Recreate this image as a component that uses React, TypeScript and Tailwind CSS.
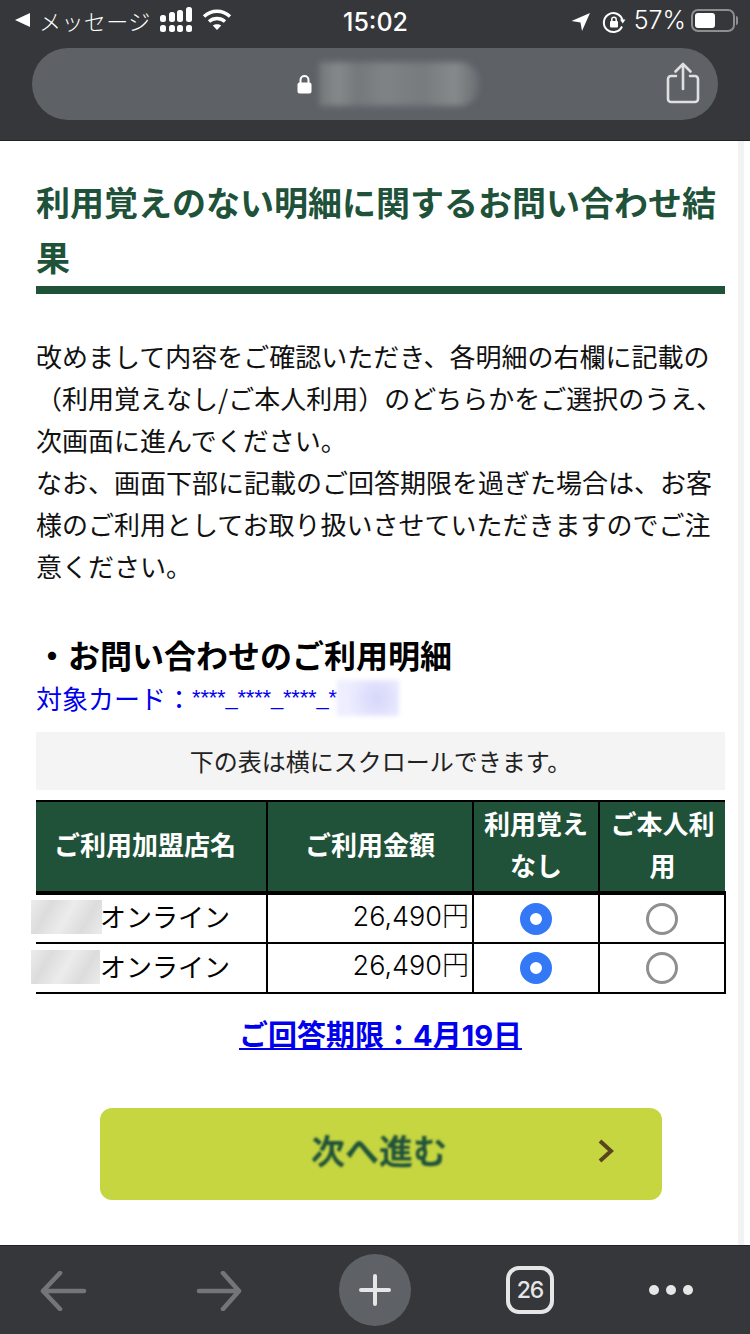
const FONT = "font-['Noto_Sans_CJK_JP','Noto_Sans',sans-serif]";

function StatusBar() {
    return (
        <div className="h-[48px] pb-[8px] flex items-center justify-between pl-[14px] pr-[12px] text-white relative">
            <div className="flex items-center">
                <svg width="17" height="16" viewBox="0 0 17 16"><path d="M1 8 L16 1 V15 Z" fill="#fff" /></svg>
                <span className="ml-[8px] text-[22px] font-light leading-none tracking-[0.4px]">メッセージ</span>
                {/* signal */}
                <svg width="34" height="26" viewBox="0 0 34 26" className="ml-[8px]" fill="#fff">
                    <rect x="1" y="8" width="6" height="7" rx="2.5" />
                    <rect x="10" y="5" width="6" height="10" rx="2.5" />
                    <rect x="18" y="3" width="6" height="12" rx="2.5" />
                    <rect x="27" y="0" width="6" height="15" rx="2.5" />
                    <rect x="1" y="18" width="6" height="7" rx="2.5" />
                    <rect x="10" y="18" width="6" height="7" rx="2.5" />
                    <rect x="18" y="18" width="6" height="7" rx="2.5" />
                    <rect x="27" y="18" width="6" height="7" rx="2.5" />
                </svg>
                <svg width="30" height="24" viewBox="0 0 30 24" className="ml-[9px]" fill="none" stroke="#fff" strokeWidth="3.4">
                    <path d="M2 8.5 C9.5 1.5 20.5 1.5 28 8.5" />
                    <path d="M7 13.5 C11.5 9.5 18.5 9.5 23 13.5" />
                    <path d="M15 22 L10.8 17.6 C13 15.8 17 15.8 19.2 17.6 Z" fill="#fff" stroke="none" />
                </svg>
            </div>
            <div className="absolute left-[343px] top-[9px] text-[25px] leading-[26px] font-['Inter',sans-serif] font-medium">15:02</div>
            <div className="flex items-center">
                <svg width="20" height="20" viewBox="0 0 20 20" className="mt-[4px]"><path d="M0.5 9 L19 1 L11 19 L9.5 10.5 Z" fill="#fff" /></svg>
                <svg width="24" height="24" viewBox="0 0 24 24" className="ml-[11px] mt-[4px]" fill="none" stroke="#fff" strokeWidth="2">
                    <path d="M20.5 10 A9.5 9.5 0 1 0 20 16.5" />
                    <path d="M18 9.5 H23.5 L20.7 13.5 Z" fill="#fff" stroke="none" />
                    <rect x="8" y="11" width="8" height="6.5" rx="1" fill="#fff" stroke="none" />
                    <path d="M9.8 11 V9.5 a2.2 2.2 0 0 1 4.4 0 V11" strokeWidth="1.5" />
                </svg>
                <span className="ml-[8px] text-[25px] leading-none font-light font-['Inter',sans-serif]">57%</span>
                <div className="ml-[5px] w-[44px] h-[23px] rounded-[7px] border-2 border-[#8d8e90] p-[2px]">
                    <div className="h-full w-[55%] rounded-[3px] bg-white" />
                </div>
                <div className="ml-[1px] w-[2px] h-[9px] rounded-r bg-[#8d8e90]" />
            </div>
        </div>
    );
}

function UrlBar() {
    return (
        <div className="h-[93px] border-b border-[#222326]">
            <div className="mx-[32px] h-[72px] rounded-[36px] bg-[#5e6166] flex items-center relative">
                <svg width="15" height="20" viewBox="0 0 15 20" className="ml-[265px]">
                    <path d="M3.5 9 V6 a4 4 0 0 1 8 0 V9" fill="none" stroke="#fff" strokeWidth="2" />
                    <rect x="0.5" y="8.5" width="14" height="11" rx="2" fill="#fff" />
                </svg>
                <div className="ml-[7px] w-[160px] h-[44px] rounded-r-[20px] bg-[linear-gradient(90deg,#74787b,#85898b_12%,#74787b_24%,#7f8386_40%,#777b7e_65%,#868a8c_85%,#6a6d71)] blur-[3px]" />
                <svg width="34" height="42" viewBox="0 0 34 42" className="absolute right-[18px] top-[14px]" fill="none" stroke="#dfe0e2" strokeWidth="2.6" strokeLinecap="round" strokeLinejoin="round">
                    <path d="M10 14 H5 a3 3 0 0 0 -3 3 V37 a3 3 0 0 0 3 3 H29 a3 3 0 0 0 3 -3 V17 a3 3 0 0 0 -3 -3 H24" />
                    <path d="M17 27 V3" />
                    <path d="M9.5 9.5 L17 2 L24.5 9.5" />
                </svg>
            </div>
        </div>
    );
}

function Radio({ on }: { on?: boolean }) {
    if (on) {
        return <div className="mx-auto w-[32px] h-[32px] rounded-full border-[10px] border-[#3478f6] bg-white" />;
    }
    return <div className="mx-auto w-[32px] h-[32px] rounded-full border-[3px] border-[#8f8f8f] bg-white" />;
}

function Row({ blurW, nameGap }: { blurW: number; nameGap: number }) {
    return (
        <tr className="h-[50px]">
            <td className="border-t-[2px] border-r-[2px] border-black p-0 text-[26px] leading-none">
                <div className="flex items-center pb-[5px]">
                    <div className="relative w-0 h-0">
                        <div className="absolute left-[-5px] top-[-16px] h-[34px] bg-[linear-gradient(120deg,#ececec,#dcdcdc,#ececec,#dcdcdc,#ececec)]" style={{ width: blurW }} />
                    </div>
                    <span style={{ marginLeft: nameGap }}>オンライン</span>
                </div>
            </td>
            <td className="border-t-[2px] border-r-[2px] border-black p-0 pr-[3px] pb-[5px] text-right text-[27px] leading-none font-light font-['Inter','Noto_Sans_CJK_JP',sans-serif]">26,490円</td>
            <td className="border-t-[2px] border-r-[2px] border-black p-0"><Radio on /></td>
            <td className="border-t-[2px] border-r-[2px] border-black p-0"><Radio /></td>
        </tr>
    );
}

export default function App() {
    return (
        <div className={`${FONT} relative w-[750px] h-[1334px] overflow-hidden bg-white flex flex-col`}>
            <div className="bg-[#36373a]">
                <StatusBar />
                <UrlBar />
            </div>

            {/* page body */}
            <div className="flex-1 pl-[36px] pr-[25px]">
                <h1 className="mt-[33px] text-[34px] leading-[55px] font-bold text-[#20523a]">利用覚えのない明細に関するお問い合わせ結果</h1>
                <div className="mt-[2px] h-[8px] bg-[#20523a]" />

                <p className="mt-[41px] text-[26px] leading-[42px] text-[#111] whitespace-pre-line">
                    {'改めまして内容をご確認いただき、各明細の右欄に記載の\n（利用覚えなし/ご本人利用）のどちらかをご選択のうえ、\n次画面に進んでください。\nなお、画面下部に記載のご回答期限を過ぎた場合は、お客\n様のご利用としてお取り扱いさせていただきますのでご注\n意ください。'}
                </p>

                <h2 className="mt-[45px] text-[32px] leading-[44px] font-bold text-black">・お問い合わせのご利用明細</h2>
                <div className="mt-[2px] flex items-center text-[26px] leading-[40px] text-[#0000ee]">
                    <span>対象カード：</span>
                    <span className="text-[22px] tracking-[-0.2px] font-['Liberation_Sans',sans-serif]">****_****_****_*</span>
                    <div className="w-[62px] h-[36px] bg-[radial-gradient(circle_at_65%_50%,#d6d6fb,#eeeeff_70%)] blur-[2px]" />
                </div>

                <div className="mt-[14px] h-[58px] bg-[#f4f4f4] flex items-center justify-center text-[24px] text-[#222]">下の表は横にスクロールできます。</div>

                <table className="mt-[10px] w-[689px] table-fixed border-collapse border-b-[2px] border-black text-black">
                    <colgroup>
                        <col className="w-[231px]" />
                        <col className="w-[206px]" />
                        <col className="w-[126px]" />
                        <col className="w-[126px]" />
                    </colgroup>
                    <thead>
                        <tr className="h-[91px] bg-[#20523a] text-white text-[26px] leading-[42px] text-center">
                            <th className="border-t-[2px] border-b-[4px] border-r-[2px] border-black p-0 pr-[12px] pb-[5px] font-bold">ご利用加盟店名</th>
                            <th className="border-t-[2px] border-b-[4px] border-r-[2px] border-black p-0 pb-[5px] font-bold">ご利用金額</th>
                            <th className="border-t-[2px] border-b-[4px] border-r-[2px] border-black p-0 pb-[5px] font-bold">利用覚え<br />なし</th>
                            <th className="border-t-[2px] border-b-[4px] border-black p-0 pb-[5px] font-bold">ご本人利<br />用</th>
                        </tr>
                    </thead>
                    <tbody>
                        <Row blurW={71} nameGap={64} />
                        <Row blurW={69} nameGap={64} />
                    </tbody>
                </table>

                <div className="mt-[21px] text-center">
                    <a className="text-[29px] leading-[42px] font-bold text-[#0000ee] underline font-['Inter','Noto_Sans_CJK_JP',sans-serif]">ご回答期限：4月19日</a>
                </div>

                <div className="mt-[51px] ml-[64px] w-[562px] h-[92px] rounded-[12px] bg-[#c6d641] flex items-center relative">
                    <span className="w-full text-center pr-[4px] pb-[10px] text-[34px] font-bold text-[#20523a] blur-[1px]">次へ進む</span>
                    <svg width="16" height="24" viewBox="0 0 16 24" className="absolute right-[48px] top-[31px] blur-[0.5px]" fill="none" stroke="#5a4420" strokeWidth="4">
                        <path d="M2 2 L13 12 L2 22" />
                    </svg>
                </div>
            </div>

            {/* scrollbar strip */}
            <div className="absolute right-[6px] top-[141px] w-[6px] h-[1104px] bg-[#f2f2f2]" />

            {/* browser toolbar */}
            <div className="h-[89px] bg-[#36373a] border-t border-[#222326] relative">
                <svg width="50" height="40" viewBox="0 0 50 40" className="absolute left-[39px] top-[25px]" fill="none" stroke="#747577" strokeWidth="4.6" strokeLinecap="round" strokeLinejoin="round">
                    <path d="M21 2 L4 20 L21 38 M4 20 H45" />
                </svg>
                <svg width="50" height="40" viewBox="0 0 50 40" className="absolute left-[194px] top-[25px]" fill="none" stroke="#747577" strokeWidth="4.6" strokeLinecap="round" strokeLinejoin="round">
                    <path d="M29 2 L45 20 L29 38 M45 20 H5" />
                </svg>
                <div className="absolute left-[339px] top-[8px] w-[72px] h-[72px] rounded-full bg-[#5e6166] flex items-center justify-center">
                    <svg width="32" height="32" viewBox="0 0 32 32" stroke="#e6e6e6" strokeWidth="4" strokeLinecap="round"><path d="M16 2 V30 M2 16 H30" /></svg>
                </div>
                <div className="absolute left-[506px] top-[20px] w-[48px] h-[48px] rounded-[13px] border-[4px] border-[#e6e6e6] flex items-center justify-center text-[23px] font-medium leading-none tracking-[-1px] text-[#e6e6e6] font-['Inter',sans-serif]">26</div>
                <div className="absolute left-[649px] top-[39px] flex gap-[7px]">
                    <div className="w-[10px] h-[10px] rounded-full bg-[#e6e6e6]" />
                    <div className="w-[10px] h-[10px] rounded-full bg-[#e6e6e6]" />
                    <div className="w-[10px] h-[10px] rounded-full bg-[#e6e6e6]" />
                </div>
            </div>
        </div>
    );
}
